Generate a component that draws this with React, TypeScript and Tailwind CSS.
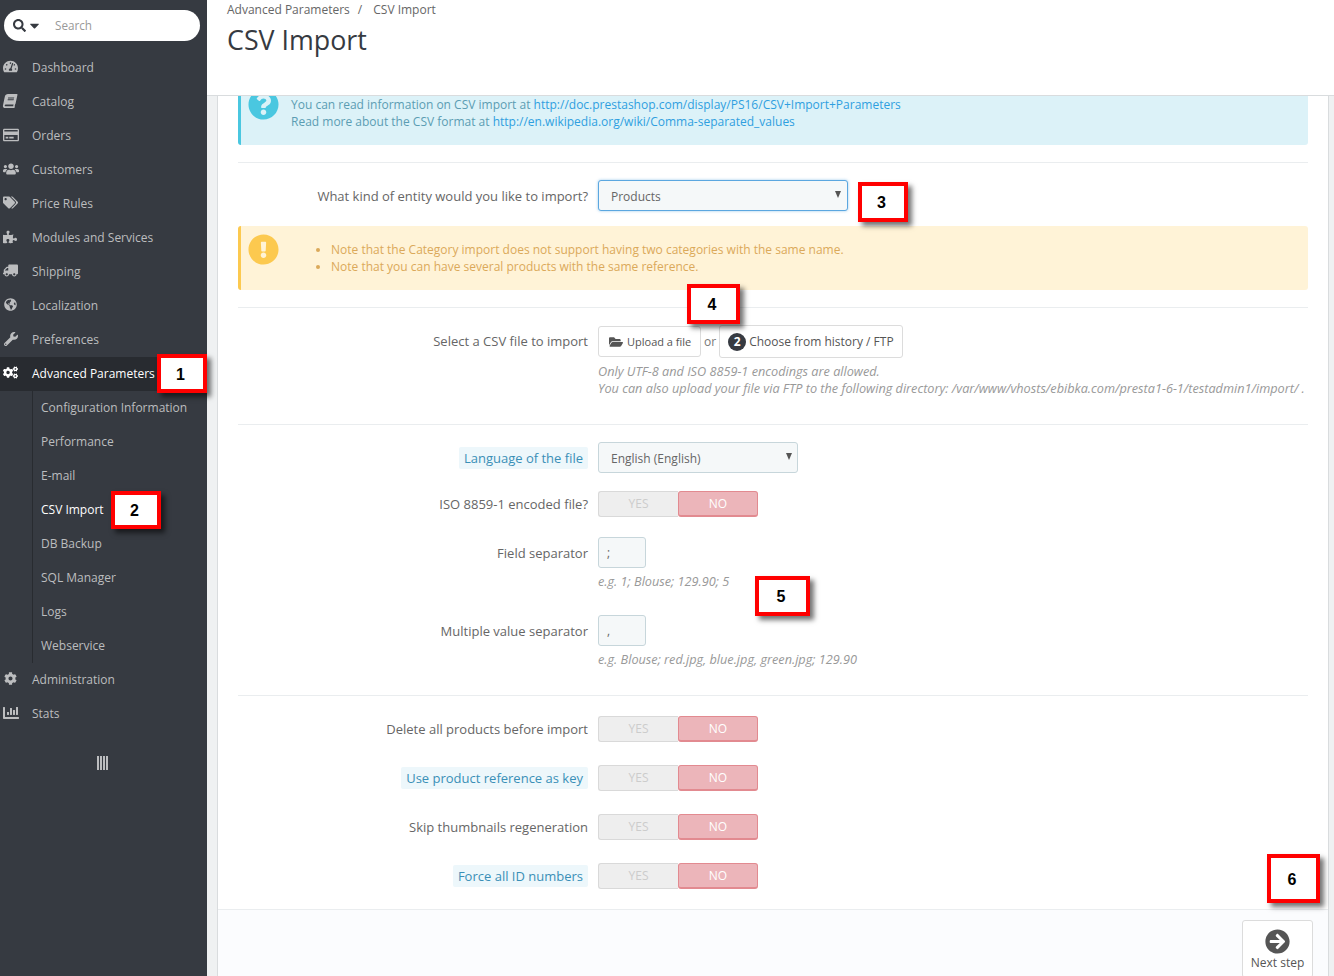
import type { ReactNode } from 'react'
import {
  FaArrowCircleRight,
  FaBook,
  FaCaretDown,
  FaChartBar,
  FaCog,
  FaCogs,
  FaExclamationCircle,
  FaFolderOpen,
  FaGlobeAmericas,
  FaPuzzlePiece,
  FaQuestionCircle,
  FaRegCreditCard,
  FaSearch,
  FaTachometerAlt,
  FaTags,
  FaTruck,
  FaUsers,
  FaWrench,
} from 'react-icons/fa'

const menuTop = [
  { label: 'Dashboard', icon: <FaTachometerAlt /> },
  { label: 'Catalog', icon: <FaBook className="-skew-x-12 text-[14px]" /> },
  { label: 'Orders', icon: <FaRegCreditCard className="text-[16px]" /> },
  { label: 'Customers', icon: <FaUsers className="text-[16px]" /> },
  { label: 'Price Rules', icon: <FaTags /> },
  { label: 'Modules and Services', icon: <FaPuzzlePiece className="text-[14px]" /> },
  { label: 'Shipping', icon: <FaTruck className="-scale-x-100" /> },
  { label: 'Localization', icon: <FaGlobeAmericas className="ml-[1px] text-[13px]" /> },
  { label: 'Preferences', icon: <FaWrench className="ml-[1px] text-[14px]" /> },
]

const subMenu = [
  'Configuration Information',
  'Performance',
  'E-mail',
  'CSV Import',
  'DB Backup',
  'SQL Manager',
  'Logs',
  'Webservice',
]

const MenuItem = ({ label, icon, active }: { label: string; icon: ReactNode; active?: boolean }) => (
  <div className={`flex h-[34px] items-center ${active ? 'bg-[#282b30] text-white' : 'text-[#bcbdbf]'}`}>
    <span className={`mt-[-3px] flex w-[32px] justify-start pl-[3px] text-[15px] ${active ? 'text-white' : 'text-[#bcbdbf]'}`}>
      {icon}
    </span>
    <span className="text-[12px]">{label}</span>
  </div>
)

const Sidebar = () => (
  <aside className="flex w-[207px] shrink-0 flex-col bg-[#363a41]">
    <div className="mx-1 mt-[10px] mb-[10px] flex h-[31px] w-[196px] items-center rounded-full bg-white text-[#363a41]">
      <FaSearch className="ml-[9px] text-[13px]" />
      <FaCaretDown className="ml-[1px] text-[15px]" />
      <span className="ml-[13px] text-[11.7px] text-[#999]">Search</span>
    </div>
    {menuTop.map((m) => (
      <MenuItem key={m.label} label={m.label} icon={m.icon} />
    ))}
    <MenuItem label="Advanced Parameters" icon={<FaCogs />} active />
    <div className="ml-[32px] border-l border-[#282b30]">
      {subMenu.map((s) => (
        <div
          key={s}
          className={`flex h-[34px] items-center pl-2 text-[12px] ${s === 'CSV Import' ? 'text-white' : 'text-[#bcbdbf]'}`}
        >
          {s}
        </div>
      ))}
    </div>
    <MenuItem label="Administration" icon={<FaCog className="ml-[1px] text-[13px]" />} />
    <MenuItem label="Stats" icon={<FaChartBar className="text-[16px]" />} />
    <div className="mt-[25px] flex justify-center gap-[1px] pr-[2px]">
      {[0, 1, 2, 3].map((i) => (
        <span key={i} className="h-[14px] w-[2px] bg-[#bcbdbf]" />
      ))}
    </div>
  </aside>
)

const Badge = ({ n, className }: { n: number; className: string }) => (
  <div
    className={`absolute z-10 flex items-center justify-center border-[4px] border-[#f00] bg-white pt-[2px] pr-[3px] font-['Liberation_Sans',sans-serif] text-[16px] font-bold text-black shadow-[4px_4px_5px_rgba(0,0,0,0.55)] ${className}`}
  >
    {n}
  </div>
)

const Label = ({ text, hint }: { text: string; hint?: boolean }) => (
  <div className="w-[380px] shrink-0 pt-[2px] pr-[10px] text-right">
    {hint ? (
      <span className="rounded-[2px] bg-[#edf7fb] px-[5px] py-[2px] text-[#3a8fb7]">{text}</span>
    ) : (
      <span className="text-[#666]">{text}</span>
    )}
  </div>
)

const Toggle = () => (
  <div className="flex h-[26px] w-[160px] text-[12px] text-white">
    <div className="flex w-[80px] items-center justify-center rounded-l-[3px] border-t border-b border-l border-[#d9d9d9] bg-[#eeeeee] text-[#cccccc]">
      YES
    </div>
    <div className="flex w-[80px] items-center justify-center rounded-[3px] border border-b-2 border-[#e28a90] bg-[#ecb5ba]">
      NO
    </div>
  </div>
)

const Help = ({ children }: { children: ReactNode }) => (
  <p className="text-[12.7px] leading-[17px] text-[#999] italic">{children}</p>
)

const ToggleRow = ({ text, hint, className }: { text: string; hint?: boolean; className: string }) => (
  <div className={`flex shrink-0 items-center ${className}`}>
    <Label text={text} hint={hint} />
    <Toggle />
  </div>
)

const Divider = ({ className }: { className: string }) => <div className={`mx-5 h-px shrink-0 bg-[#eaedef] ${className}`} />

const SelectArrow = ({ className }: { className: string }) => (
  <span className={`absolute h-0 w-0 border-x-[3.5px] border-t-[7px] border-x-transparent border-t-[#555] ${className}`} />
)

const inputClass = 'rounded-[3px] border bg-[#f5f8f9] text-[12px] text-[#666]'

const App = () => (
  <div className="flex h-[976px] w-[1334px] overflow-hidden bg-[#eff1f2] font-['Open_Sans',sans-serif] text-[13px]">
    <Sidebar />
    <main className="relative flex min-w-0 flex-1 flex-col">
      <header className="h-[96px] shrink-0 border-b border-[#d9dcde] bg-white pl-[20px]">
        <div className="flex h-[20px] items-center text-[12px] text-[#666]">
          Advanced Parameters
          <span className="mr-[11px] ml-[8px]">/</span>
          CSV Import
        </div>
        <h1 className="mt-[1px] text-[26.8px] leading-[38px] text-[#363a41]">CSV Import</h1>
      </header>

      <div className="ml-[10px] mr-[5px] flex min-h-0 flex-1 flex-col overflow-hidden border-x border-[#d9dcde] bg-white">
        <div className="mx-5 flex h-[49px] shrink-0 items-start rounded-b-[3px] border-l-[3px] border-[#4ac7e0] bg-[#dcf2f8] text-[12px] leading-[17px]">
          <FaQuestionCircle className="mt-[-7px] ml-[7px] text-[31px] text-[#4ac7e0]" />
          <div className="ml-[12px] text-[#5b9db3]">
            <div>
              You can read information on CSV import at{' '}
              <span className="text-[#2f9fe0]">http://doc.prestashop.com/display/PS16/CSV+Import+Parameters</span>
            </div>
            <div>
              Read more about the CSV format at{' '}
              <span className="text-[#2f9fe0]">http://en.wikipedia.org/wiki/Comma-separated_values</span>
            </div>
          </div>
        </div>

        <Divider className="mt-[17px]" />

        <div className="mt-[17px] flex shrink-0 items-center">
          <Label text="What kind of entity would you like to import?" />
          <div className={`${inputClass} relative flex h-[31px] w-[250px] items-center border-[#5ba7e0] pt-[2px] pl-[12px] shadow-[0_0_3px_rgba(91,167,224,0.6)]`}>
            Products
            <SelectArrow className="top-[10px] right-[6px]" />
          </div>
        </div>

        <div className="mx-5 mt-[15px] flex h-[64px] shrink-0 rounded-[3px] border-l-[3px] border-[#fcc94f] bg-[#fff3d7] text-[12px] leading-[17px] text-[#dba95a]">
          <FaExclamationCircle className="mt-[8px] ml-[7px] text-[31px] text-[#fcc94f]" />
          <ul className="mt-[15px] ml-[52px] list-disc">
            <li>Note that the Category import does not support having two categories with the same name.</li>
            <li>Note that you can have several products with the same reference.</li>
          </ul>
        </div>

        <Divider className="mt-[17px]" />

        <div className="mt-[17px] flex shrink-0">
          <div className="pt-[5px]">
            <Label text="Select a CSV file to import" />
          </div>
          <div>
            <div className="flex items-center text-[12px] text-[#555]">
              <div className="flex h-[31px] w-[103px] items-center rounded-[3px] border border-[#dcdcdc] pt-[1px] pl-[10px] text-[11px]">
                <FaFolderOpen className="mr-[4px] text-[14px] text-[#555]" />
                Upload a file
              </div>
              <span className="mx-[3px] text-[#777]">or</span>
              <div className="flex h-[33px] w-[184px] items-center rounded-[3px] border border-[#dcdcdc] pt-[1px] pl-[8px]">
                <span className="mr-[3px] flex h-[18px] w-[18px] items-center justify-center rounded-full bg-[#363a41] text-[12px] font-bold text-white">
                  2
                </span>
                Choose from history / FTP
              </div>
            </div>
            <div className="mt-[5px]">
              <Help>Only UTF-8 and ISO 8859-1 encodings are allowed.</Help>
              <Help>You can also upload your file via FTP to the following directory: /var/www/vhosts/ebibka.com/presta1-6-1/testadmin1/import/ .</Help>
            </div>
          </div>
        </div>

        <Divider className="mt-[27px]" />

        <div className="mt-[17px] flex shrink-0 items-center">
          <Label text="Language of the file" hint />
          <div className={`${inputClass} relative flex h-[31px] w-[200px] items-center border-[#c7d6db] pt-[2px] pl-[12px]`}>
            English (English)
            <SelectArrow className="top-[10px] right-[5px]" />
          </div>
        </div>

        <ToggleRow text="ISO 8859-1 encoded file?" className="mt-[18px]" />

        <div className="mt-[20px] flex shrink-0">
          <div className="pt-[5px]">
            <Label text="Field separator" />
          </div>
          <div>
            <div className={`${inputClass} flex h-[31px] w-[48px] items-center border-[#c7d6db] pl-[8px]`}>;</div>
            <div className="mt-[5px]">
              <Help>e.g. 1; Blouse; 129.90; 5</Help>
            </div>
          </div>
        </div>

        <div className="mt-[25px] flex shrink-0">
          <div className="pt-[5px]">
            <Label text="Multiple value separator" />
          </div>
          <div>
            <div className={`${inputClass} flex h-[31px] w-[48px] items-center border-[#c7d6db] pl-[8px]`}>,</div>
            <div className="mt-[5px]">
              <Help>e.g. Blouse; red.jpg, blue.jpg, green.jpg; 129.90</Help>
            </div>
          </div>
        </div>

        <Divider className="mt-[27px]" />

        <ToggleRow text="Delete all products before import" className="mt-[20px]" />
        <ToggleRow text="Use product reference as key" hint className="mt-[23px]" />
        <ToggleRow text="Skip thumbnails regeneration" className="mt-[23px]" />
        <ToggleRow text="Force all ID numbers" hint className="mt-[23px]" />

        <div className="mt-[20px] flex flex-1 justify-end border-t border-[#eaedef] bg-[#fbfcfe] pt-[10px] pr-[15px]">
          <div className="flex h-[58px] w-[71px] flex-col items-center rounded-[3px] border border-[#dcdcdc] bg-white pt-[8px] text-[12px] text-[#555]">
            <FaArrowCircleRight className="text-[25px] text-[#555]" />
            <span>Next step</span>
          </div>
        </div>
      </div>

      <Badge n={1} className="top-[354px] left-[-50px] h-[39px] w-[50px]" />
      <Badge n={2} className="top-[491px] left-[-96px] h-[38px] w-[50px]" />
      <Badge n={3} className="top-[182px] left-[651px] h-[40px] w-[50px]" />
      <Badge n={4} className="top-[284px] left-[480px] h-[40px] w-[53px]" />
      <Badge n={5} className="top-[576px] left-[548px] h-[40px] w-[55px]" />
      <Badge n={6} className="top-[854px] left-[1060px] h-[49px] w-[53px]" />
    </main>
  </div>
)

export default App
